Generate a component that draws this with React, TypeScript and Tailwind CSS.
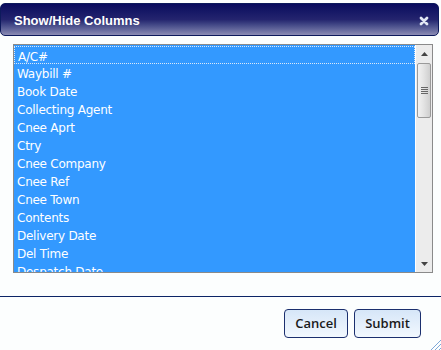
const COLUMNS = [
  "A/C#",
  "Waybill #",
  "Book Date",
  "Collecting Agent",
  "Cnee Aprt",
  "Ctry",
  "Cnee Company",
  "Cnee Ref",
  "Cnee Town",
  "Contents",
  "Delivery Date",
  "Del Time",
  "Despatch Date",
];

export default function App() {
  return (
    <div className="relative w-[441px] h-[350px] bg-[#fcfefe] overflow-hidden font-['DejaVu_Sans',sans-serif]">
      {/* Title bar */}
      <div className="mt-[3px] w-[439px] h-[33px] rounded-[5px] border border-[#0d1a5c] bg-gradient-to-b from-[#0a0a5e] via-[#24246e] to-[#8c8cb4] flex items-center justify-between pl-[13px] pr-[9px] pt-[2px]">
        <span className="text-white font-bold text-[13px] font-['Liberation_Sans',sans-serif]">Show/Hide Columns</span>
        <svg width="10" height="10" viewBox="0 0 10 10">
          <path d="M2 2 L8 8 M8 2 L2 8" stroke="#e2e8f4" strokeWidth="2.8" strokeLinecap="round" />
        </svg>
      </div>

      {/* List box */}
      <div className="ml-[13px] mt-[8px] w-[420px] h-[229px] border border-[#8a8a8a] bg-[#3399ff] flex overflow-hidden">
        <div className="flex-1 overflow-hidden pt-[1px]">
          {COLUMNS.map((c, i) => (
            <div
              key={c}
              className={
                "h-[18px] pl-[3px] pt-[2px] text-white text-[12px] leading-[16px] tracking-[-0.25px] whitespace-nowrap " +
                (i === 0 ? "border border-dotted border-[#dbe8f8] pl-[2px] pt-[1px] leading-[15px]" : "")
              }
            >
              {c}
            </div>
          ))}
        </div>
        {/* Scrollbar */}
        <div className="w-[17px] h-full bg-[#ececec] border-l border-white flex flex-col items-center">
          <div className="h-[17px] flex items-center justify-center">
            <svg width="7" height="4" viewBox="0 0 7 4">
              <path d="M3.5 0 L7 4 L0 4 Z" fill="#444" />
            </svg>
          </div>
          <div className="w-[14px] h-[55px] mt-[1px] rounded-[2px] border border-[#9a9a9a] bg-gradient-to-r from-[#f2f2f2] via-[#e2e2e2] to-[#cfcfcf] flex flex-col items-center justify-center gap-[1px]">
            <div className="w-[7px] h-[1px] bg-[#666]" />
            <div className="w-[7px] h-[1px] bg-[#666]" />
            <div className="w-[7px] h-[1px] bg-[#666]" />
            <div className="w-[7px] h-[1px] bg-[#666]" />
          </div>
          <div className="flex-1" />
          <div className="h-[17px] flex items-center justify-center">
            <svg width="7" height="4" viewBox="0 0 7 4">
              <path d="M0 0 L7 0 L3.5 4 Z" fill="#444" />
            </svg>
          </div>
        </div>
      </div>

      {/* Separator */}
      <div className="mt-[23px] h-[1px] bg-[#0c2466]" />

      {/* Buttons */}
      <div className="mt-[12px] flex justify-end gap-[6px] pr-[20px] font-['Open_Sans',sans-serif]">
        <button className="w-[64px] h-[29px] rounded-[4px] border border-[#1b2f6e] bg-gradient-to-b from-[#d6e6f8] to-[#f2f8fe] text-[#1a1a1a] text-[13px] font-semibold">
          Cancel
        </button>
        <button className="w-[67px] h-[29px] rounded-[4px] border border-[#1b2f6e] bg-gradient-to-b from-[#d6e6f8] to-[#f2f8fe] text-[#1a1a1a] text-[13px] font-semibold">
          Submit
        </button>
      </div>

      {/* Resize grip */}
      <svg className="absolute right-0 bottom-0" width="12" height="12" viewBox="0 0 12 12">
        <path d="M12 2 L2 12 M12 6 L6 12 M12 10 L10 12" stroke="#7fa8d8" strokeWidth="1" />
      </svg>
    </div>
  );
}
